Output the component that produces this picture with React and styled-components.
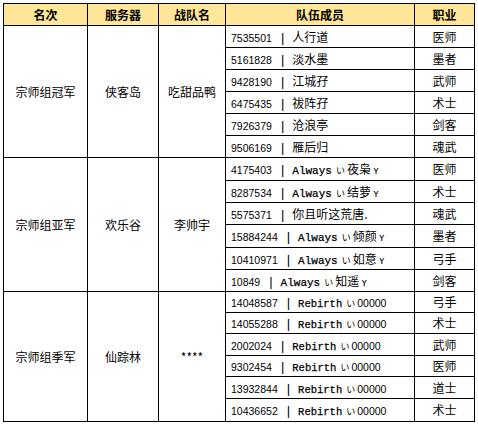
import React from "react";
import styled, { createGlobalStyle } from "styled-components";

const Global = createGlobalStyle`
  html, body { margin: 0; padding: 0; background: #fff; }
  body { font-family: "Noto Sans CJK SC", "Liberation Sans", sans-serif; color: #000; }
`;

const Page = styled.div`
  padding: 3px 0 0 3px;
`;

const Table = styled.table`
  border-collapse: separate;
  border-spacing: 0;
  table-layout: fixed;
  width: 472px;
  border-left: 1px solid #000;
  border-top: 1px solid #000;
`;

const Col = styled.col`
  width: ${(p) => p.$w}px;
`;

const HeadCell = styled.th`
  background: #ffe699;
  height: 21px;
  padding: 0;
  border-right: 1px solid #000;
  border-bottom: 1px solid #000;
  font-size: 12px;
  font-weight: bold;
  line-height: 14px;
  text-align: center;
  vertical-align: middle;
`;

const GroupCell = styled.td`
  padding: 0;
  border-right: 1px solid #000;
  border-bottom: 1px solid #000;
  font-size: 12px;
  line-height: 14px;
  text-align: center;
  vertical-align: middle;
  white-space: nowrap;
`;

const MemberCell = styled.td`
  height: ${(p) => p.$h - 1}px;
  padding: 0 0 0 5px;
  border-right: 1px solid #000;
  border-bottom: 1px solid #000;
  vertical-align: middle;
  white-space: nowrap;
  line-height: 14px;
`;

const JobCell = styled.td`
  height: ${(p) => p.$h - 1}px;
  padding: 0;
  border-right: 1px solid #000;
  border-bottom: 1px solid #000;
  font-size: 12px;
  line-height: 14px;
  text-align: center;
  vertical-align: middle;
`;

const Id = styled.span`
  font-family: "Liberation Sans", "DejaVu Sans", sans-serif;
  font-size: 10.5px;
`;

const Sep = styled.span`
  font-family: "Liberation Sans", sans-serif;
  font-size: 13px;
  margin: 0 8px 0 9px;
`;

const Name = styled.span`
  font-size: 12px;
  font-family: "Noto Sans CJK SC", sans-serif;
`;

const Latin = styled.span`
  font-family: "Liberation Mono", monospace;
  font-size: ${(p) => p.$size}px;
  -webkit-text-stroke: 0.25px #000;
`;

const Small = styled.span`
  font-family: "Noto Sans CJK JP", sans-serif;
  font-size: 9px;
  margin: 0 2px 0 4px;
`;

const Tail = styled.span`
  font-family: "DejaVu Sans", sans-serif;
  font-size: 10px;
  margin-left: 2px;
`;

const NameText = ({ n }) => {
  if (n.type === "always")
    return (
      <>
        <Latin $size={11}>Always</Latin>
        <Small>い</Small>
        <Name>{n.name}</Name>
        <Tail>ʏ</Tail>
      </>
    );
  if (n.type === "rebirth")
    return (
      <>
        <Latin $size={10.5}>Rebirth</Latin>
        <Small>い</Small>
        <Id>00000</Id>
      </>
    );
  return <Name>{n.name}</Name>;
};

const groups = [
  {
    rank: "宗师组冠军",
    server: "侠客岛",
    team: "吃甜品鸭",
    rows: [
      ["7535501", { name: "人行道" }, "医师", 22],
      ["5161828", { name: "淡水墨" }, "墨者", 22],
      ["9428190", { name: "江城孖" }, "武师", 22],
      ["6475435", { name: "祓阵孖" }, "术士", 22],
      ["7926379", { name: "沧浪亭" }, "剑客", 22],
      ["9506169", { name: "雁后归" }, "魂武", 22],
    ],
  },
  {
    rank: "宗师组亚军",
    server: "欢乐谷",
    team: "李帅宇",
    rows: [
      ["4175403", { type: "always", name: "夜枭" }, "医师", 23],
      ["8287534", { type: "always", name: "结萝" }, "术士", 22],
      ["5575371", { name: "你且听这荒唐." }, "魂武", 22],
      ["15884244", { type: "always", name: "倾颜" }, "墨者", 23],
      ["10410971", { type: "always", name: "如意" }, "弓手", 22],
      ["10849", { type: "always", name: "知遥" }, "剑客", 22],
    ],
  },
  {
    rank: "宗师组季军",
    server: "仙踪林",
    team: "****",
    rows: [
      ["14048587", { type: "rebirth" }, "弓手", 21],
      ["14055288", { type: "rebirth" }, "术士", 21],
      ["2002024", { type: "rebirth" }, "武师", 22],
      ["9302454", { type: "rebirth" }, "医师", 21],
      ["13932844", { type: "rebirth" }, "道士", 22],
      ["10436652", { type: "rebirth" }, "术士", 23],
    ],
  },
];

export default function App() {
  return (
    <Page>
      <Global />
      <Table>
        <colgroup>
          <Col $w={84} />
          <Col $w={71} />
          <Col $w={67} />
          <Col $w={189} />
          <Col $w={60} />
        </colgroup>
        <thead>
          <tr>
            <HeadCell>名次</HeadCell>
            <HeadCell>服务器</HeadCell>
            <HeadCell>战队名</HeadCell>
            <HeadCell>队伍成员</HeadCell>
            <HeadCell>职业</HeadCell>
          </tr>
        </thead>
        <tbody>
          {groups.map((g) =>
            g.rows.map((r, i) => (
              <tr key={g.rank + i}>
                {i === 0 && (
                  <>
                    <GroupCell rowSpan={g.rows.length}>{g.rank}</GroupCell>
                    <GroupCell rowSpan={g.rows.length}>{g.server}</GroupCell>
                    <GroupCell rowSpan={g.rows.length}>{g.team}</GroupCell>
                  </>
                )}
                <MemberCell $h={r[3]}>
                  <Id>{r[0]}</Id>
                  <Sep>|</Sep>
                  <NameText n={r[1]} />
                </MemberCell>
                <JobCell $h={r[3]}>{r[2]}</JobCell>
              </tr>
            ))
          )}
        </tbody>
      </Table>
    </Page>
  );
}
